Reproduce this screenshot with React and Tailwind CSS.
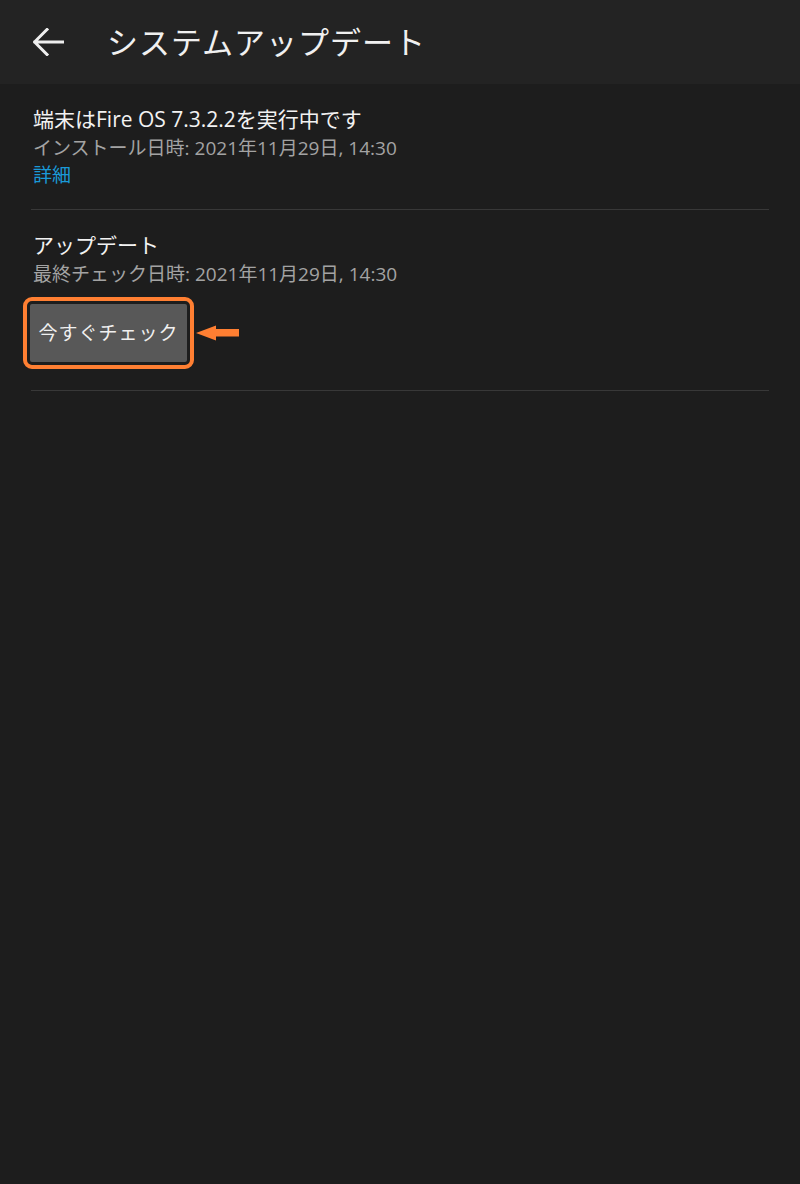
export default function App() {
  const font = {
    fontFamily: '"Open Sans", "Noto Sans CJK JP", sans-serif',
  };

  return (
    <div
      className="w-[800px] h-[1184px] bg-[#1d1d1d] text-[#f2f2f2] flex flex-col"
      style={font}
    >
      {/* Header */}
      <div className="h-[84px] bg-[#232323] flex items-center shrink-0">
        <div className="w-[107px] pl-[33px] flex items-center">
          <svg width="31" height="28" viewBox="0 0 31 28" fill="none">
            <path
              d="M30 14H2M14 1.5L1.5 14L14 26.5"
              stroke="#eeeeee"
              strokeWidth="3"
              strokeLinecap="square"
            />
          </svg>
        </div>
        <div className="text-[31px] leading-none tracking-[1px] text-[#f0f0f0]">
          システムアップデート
        </div>
      </div>

      {/* Content */}
      <div className="px-[31px]">
        <div className="pt-[20px] pb-[21px] border-b border-[#383838] pl-[2px]">
          <div className="text-[21px] leading-[30px]">
            端末はFire OS 7.3.2.2を実行中です
          </div>
          <div className="text-[19px] leading-[28px] text-[#a3a3a3]">
            インストール日時: 2021年11月29日, 14:30
          </div>
          <div className="text-[19px] leading-[26px] text-[#1a9ad8]">詳細</div>
        </div>

        <div className="pt-[20px] pb-[21px] border-b border-[#383838] pl-[2px]">
          <div className="text-[21px] leading-[30px]">アップデート</div>
          <div className="text-[19px] leading-[28px] text-[#a3a3a3]">
            最終チェック日時: 2021年11月29日, 14:30
          </div>
          <div className="mt-[9px] -ml-[10px] flex items-center">
            <div className="w-[171px] h-[72px] rounded-[9px] border-[4px] border-[#ff7f32] p-[3px]">
              <button className="w-full h-full bg-[#585858] rounded-[2px] text-[19px] tracking-[1px] text-[#f0f0f0]">
                今すぐチェック
              </button>
            </div>
            <svg width="45" height="16" viewBox="0 0 45 16" className="ml-[1px]">
              <path d="M1 8L21 0.5V4H44V11.5H21V15.5Z" fill="#ff7f32" />
            </svg>
          </div>
        </div>
      </div>
    </div>
  );
}
